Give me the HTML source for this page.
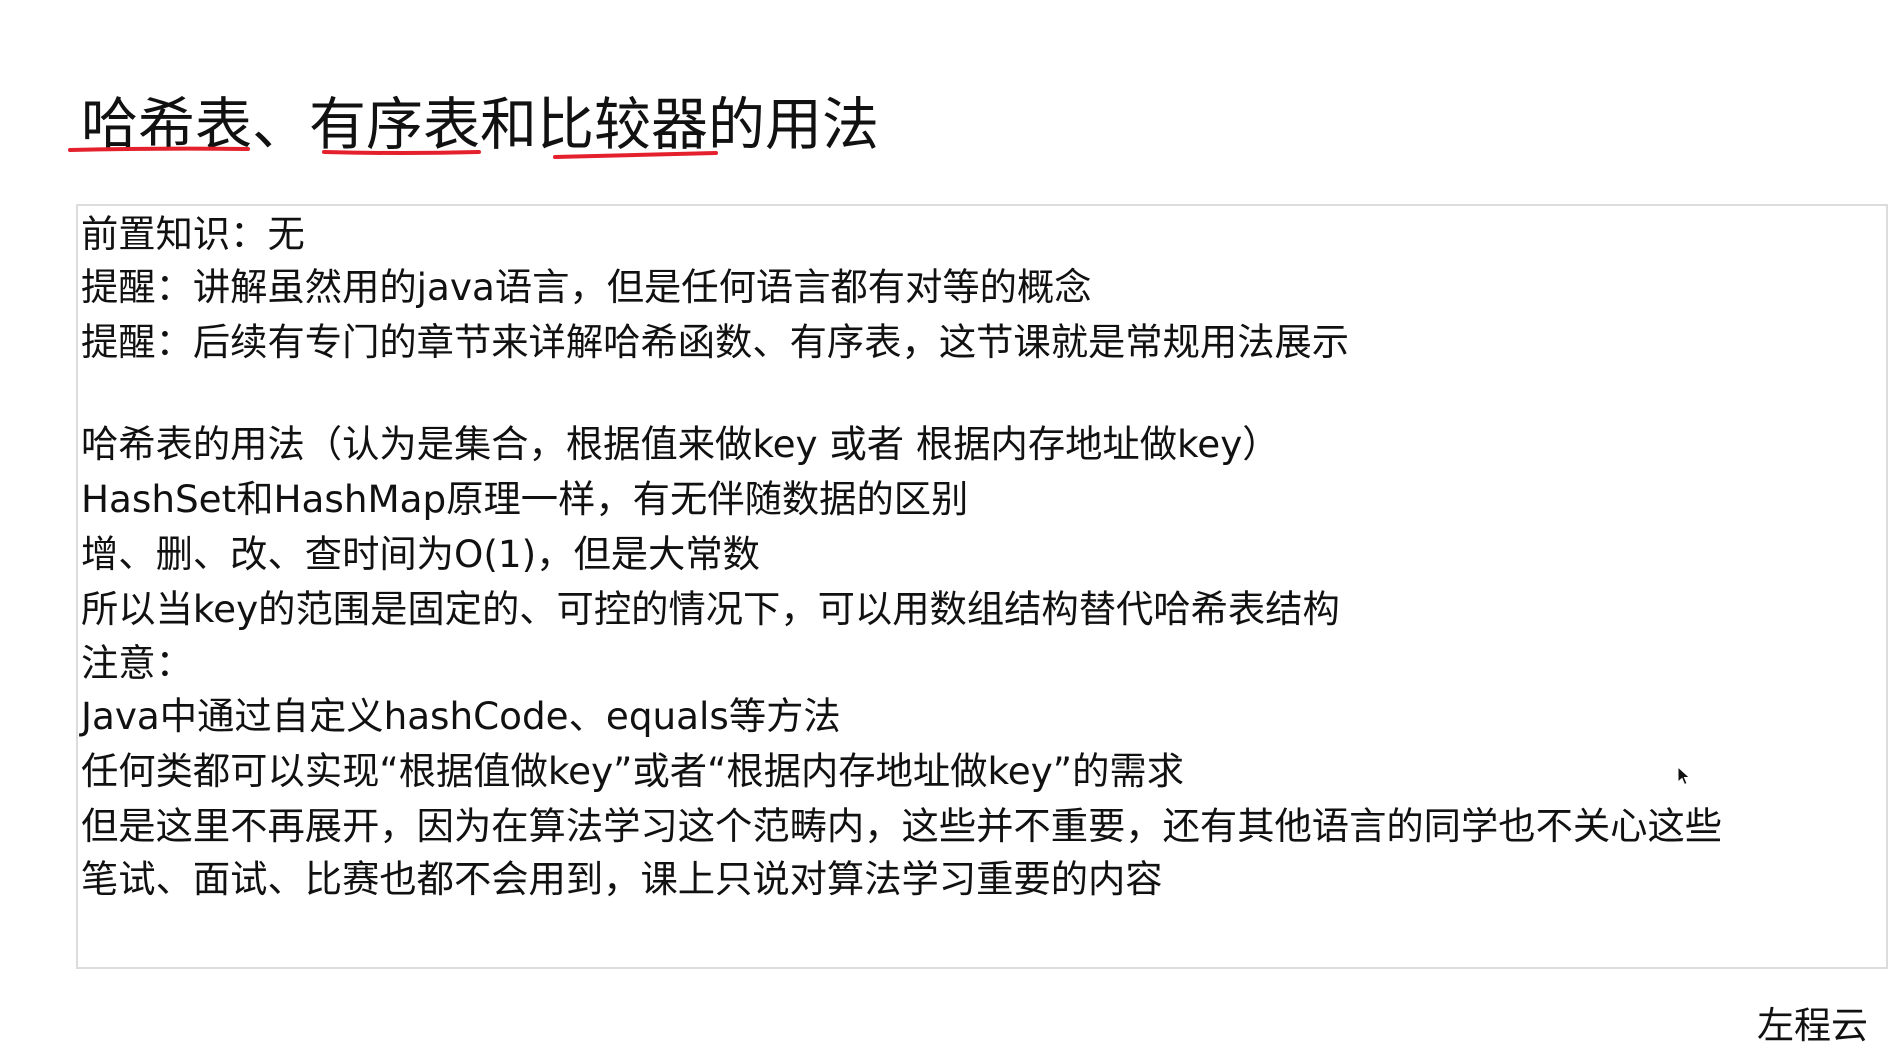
<!DOCTYPE html>
<html><head><meta charset="utf-8">
<style>
html,body{margin:0;padding:0;background:#fff;}
body{width:1899px;height:1041px;position:relative;overflow:hidden;font-family:"DejaVu Sans","Noto Sans CJK SC",sans-serif;color:#111;}
.t{position:absolute;left:81px;font-size:57px;top:83px;line-height:74px;white-space:nowrap;font-family:"Noto Sans CJK SC",sans-serif;}
.box{position:absolute;left:76px;top:204px;width:1812px;height:765px;border:2px solid #dcdcdc;box-sizing:border-box;}
.l{position:absolute;left:81px;font-size:37.3px;line-height:50px;height:50px;white-space:nowrap;}
.wm{position:absolute;left:1757px;top:997px;font-size:37px;line-height:50px;font-family:"Noto Sans CJK SC",sans-serif;}
</style></head><body>
<div class="t">哈希表、有序表和比较器的用法</div>
<svg style="position:absolute;left:0;top:0" width="1899" height="200">
<path d="M70 150 Q160 148 248 149" stroke="#e3202c" stroke-width="4" fill="none" stroke-linecap="round"/>
<path d="M324 152 Q400 154 479 152" stroke="#e3202c" stroke-width="4" fill="none" stroke-linecap="round"/>
<path d="M555 157 Q640 155 716 153" stroke="#e3202c" stroke-width="4" fill="none" stroke-linecap="round"/>
</svg>
<div class="box"></div>
<div class="l" style="top:209px">前置知识：无</div>
<div class="l" style="top:262px">提醒：讲解虽然用的java语言，但是任何语言都有对等的概念</div>
<div class="l" style="top:317px">提醒：后续有专门的章节来详解哈希函数、有序表，这节课就是常规用法展示</div>
<div class="l" style="top:419px">哈希表的用法（认为是集合，根据值来做key 或者 根据内存地址做key）</div>
<div class="l" style="top:474px">HashSet和HashMap原理一样，有无伴随数据的区别</div>
<div class="l" style="top:529px">增、删、改、查时间为O(1)，但是大常数</div>
<div class="l" style="top:584px">所以当key的范围是固定的、可控的情况下，可以用数组结构替代哈希表结构</div>
<div class="l" style="top:638px">注意：</div>
<div class="l" style="top:691px">Java中通过自定义hashCode、equals等方法</div>
<div class="l" style="top:746px">任何类都可以实现“根据值做key”或者“根据内存地址做key”的需求</div>
<div class="l" style="top:801px">但是这里不再展开，因为在算法学习这个范畴内，这些并不重要，还有其他语言的同学也不关心这些</div>
<div class="l" style="top:854px">笔试、面试、比赛也都不会用到，课上只说对算法学习重要的内容</div>
<svg style="position:absolute;left:1677px;top:766px" width="16" height="22"><path d="M1 1 L1 16 L5 12.5 L7.5 18.5 L10 17.5 L7.5 11.5 L12.5 11.5 Z" fill="#111" stroke="#fff" stroke-width="1"/></svg>
<div class="wm">左程云</div>
</body></html>
